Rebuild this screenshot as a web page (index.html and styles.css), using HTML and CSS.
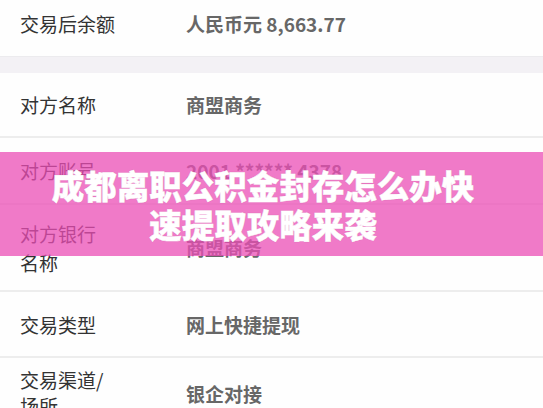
FILE: index.html
```html
<!DOCTYPE html>
<html lang="zh-CN">
<head>
<meta charset="utf-8">
<link rel="stylesheet" href="styles.css">
</head>
<body>
<div class="page">
  <div class="row r1">
    <div class="label">交易后余额</div>
    <div class="value">人民币元 8,663.77</div>
  </div>
  <div class="gap"></div>
  <div class="row r2">
    <div class="label">对方名称</div>
    <div class="value">商盟商务</div>
  </div>
  <div class="row r3 line">
    <div class="label">对方账号</div>
    <div class="value">2001 ****** 4378</div>
  </div>
  <div class="row r4 line">
    <div class="label">对方银行<br>名称</div>
    <div class="value">商盟商务</div>
  </div>
  <div class="row r5 line">
    <div class="label">交易类型</div>
    <div class="value">网上快捷提现</div>
  </div>
  <div class="row r6 line">
    <div class="label">交易渠道/<br>场所</div>
    <div class="value">银企对接</div>
  </div>
  <div class="banner">
    <h1 class="title">成都离职公积金封存怎么办快速提取攻略来袭</h1>
  </div>
</div>
</body>
</html>
```
FILE: styles.css
```css
html, body {
  margin: 0;
  padding: 0;
  background: #fefefe;
}
body {
  font-family: "Noto Sans CJK SC", "Noto Sans", sans-serif;
  width: 543px;
  height: 408px;
  overflow: hidden;
}
.page {
  position: relative;
  display: flex;
  flex-direction: column;
}
.row {
  display: flex;
  align-items: center;
  padding-left: 20px;
  box-sizing: border-box;
}
.line {
  border-top: 2px solid #ededed;
}
.label {
  width: 166px;
  font-size: 19px;
  line-height: 29px;
  color: #333;
}
.value {
  font-size: 19px;
  line-height: 29px;
  color: #676767;
  font-weight: 700;
}
.r1 { height: 56px; padding-bottom: 10px; }
.gap { height: 17px; background: #f3f1f5; border-top: 1px solid #ecebee; box-sizing: border-box; }
.r2 { height: 63px; }
.r3 { height: 67px; }
.r4 { height: 87px; }
.r5 { height: 66px; }
.r6 { height: 72px; }
.r6 .label { line-height: 26px; }
.banner {
  position: absolute;
  left: 0;
  right: 0;
  top: 152px;
  height: 104px;
  background: rgba(235, 78, 182, 0.75);
  display: flex;
  align-items: center;
  justify-content: center;
  padding-right: 17px;
  box-sizing: border-box;
}
.title {
  margin: 0;
  width: 440px;
  text-align: center;
  color: #fff;
  font-size: 32.5px;
  line-height: 39px;
  font-weight: 900;
  -webkit-text-stroke: 0.5px #fff;
  text-shadow: 0 0 1px rgba(60, 0, 40, 0.3);
}
```
